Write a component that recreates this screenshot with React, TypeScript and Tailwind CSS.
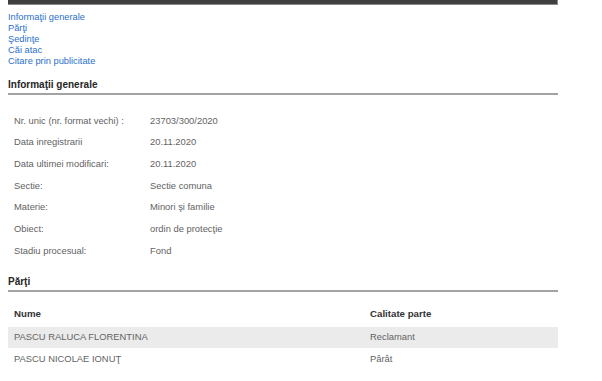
const links = ['Informaţii generale', 'Părţi', 'Şedinţe', 'Căi atac', 'Citare prin publicitate'];

const info = [
  ['Nr. unic (nr. format vechi) :', '23703/300/2020'],
  ['Data inregistrarii', '20.11.2020'],
  ['Data ultimei modificari:', '20.11.2020'],
  ['Sectie:', 'Sectie comuna'],
  ['Materie:', 'Minori şi familie'],
  ['Obiect:', 'ordin de protecţie'],
  ['Stadiu procesual:', 'Fond'],
];

const parti = [
  ['PASCU RALUCA FLORENTINA', 'Reclamant'],
  ['PASCU NICOLAE IONUŢ', 'Pârât'],
];

const SectionTitle = ({ children }: { children: string }) => (
  <h2 className="h-[18px] border-b-2 border-[#a3a3a3] text-[10px] font-bold leading-[16px] text-[#262626]">
    {children}
  </h2>
);

export default function App() {
  return (
    <div className="min-h-[381px] bg-white font-['Liberation_Sans',Arial,sans-serif]">
      <div className="ml-2 w-[550px]">
        <div className="h-[5px] border-b border-r border-[#8a8a8a] bg-[#3f3f3f]" />

        <ul className="mt-[6.5px] text-[9.3px] leading-[11px] text-[#2b6fcb]">
          {links.map((l) => (
            <li key={l}>
              <a href="#">{l}</a>
            </li>
          ))}
        </ul>

        <div className="mt-[10.5px]">
          <SectionTitle>Informaţii generale</SectionTitle>
        </div>

        <div className="mt-[15px] text-[9.4px] text-[#636363]">
          {info.map(([k, v]) => (
            <div key={k} className="flex h-[21.67px] items-center">
              <span className="w-[142px] pl-[6px]">{k}</span>
              <span>{v}</span>
            </div>
          ))}
        </div>

        <div className="mt-[12px]">
          <SectionTitle>Părţi</SectionTitle>
        </div>

        <div className="mt-[10px] text-[9.4px]">
          <div className="flex h-[25px] items-center text-[9.7px] font-bold text-[#333]">
            <span className="w-[362px] pl-[6px]">Nume</span>
            <span>Calitate parte</span>
          </div>
          {parti.map(([n, c], i) => (
            <div
              key={n}
              className={`flex h-[21.67px] items-center text-[#636363] ${i % 2 === 0 ? 'bg-[#ebebeb]' : ''}`}
            >
              <span className="w-[362px] pl-[6px]">{n}</span>
              <span>{c}</span>
            </div>
          ))}
        </div>
      </div>
    </div>
  );
}
